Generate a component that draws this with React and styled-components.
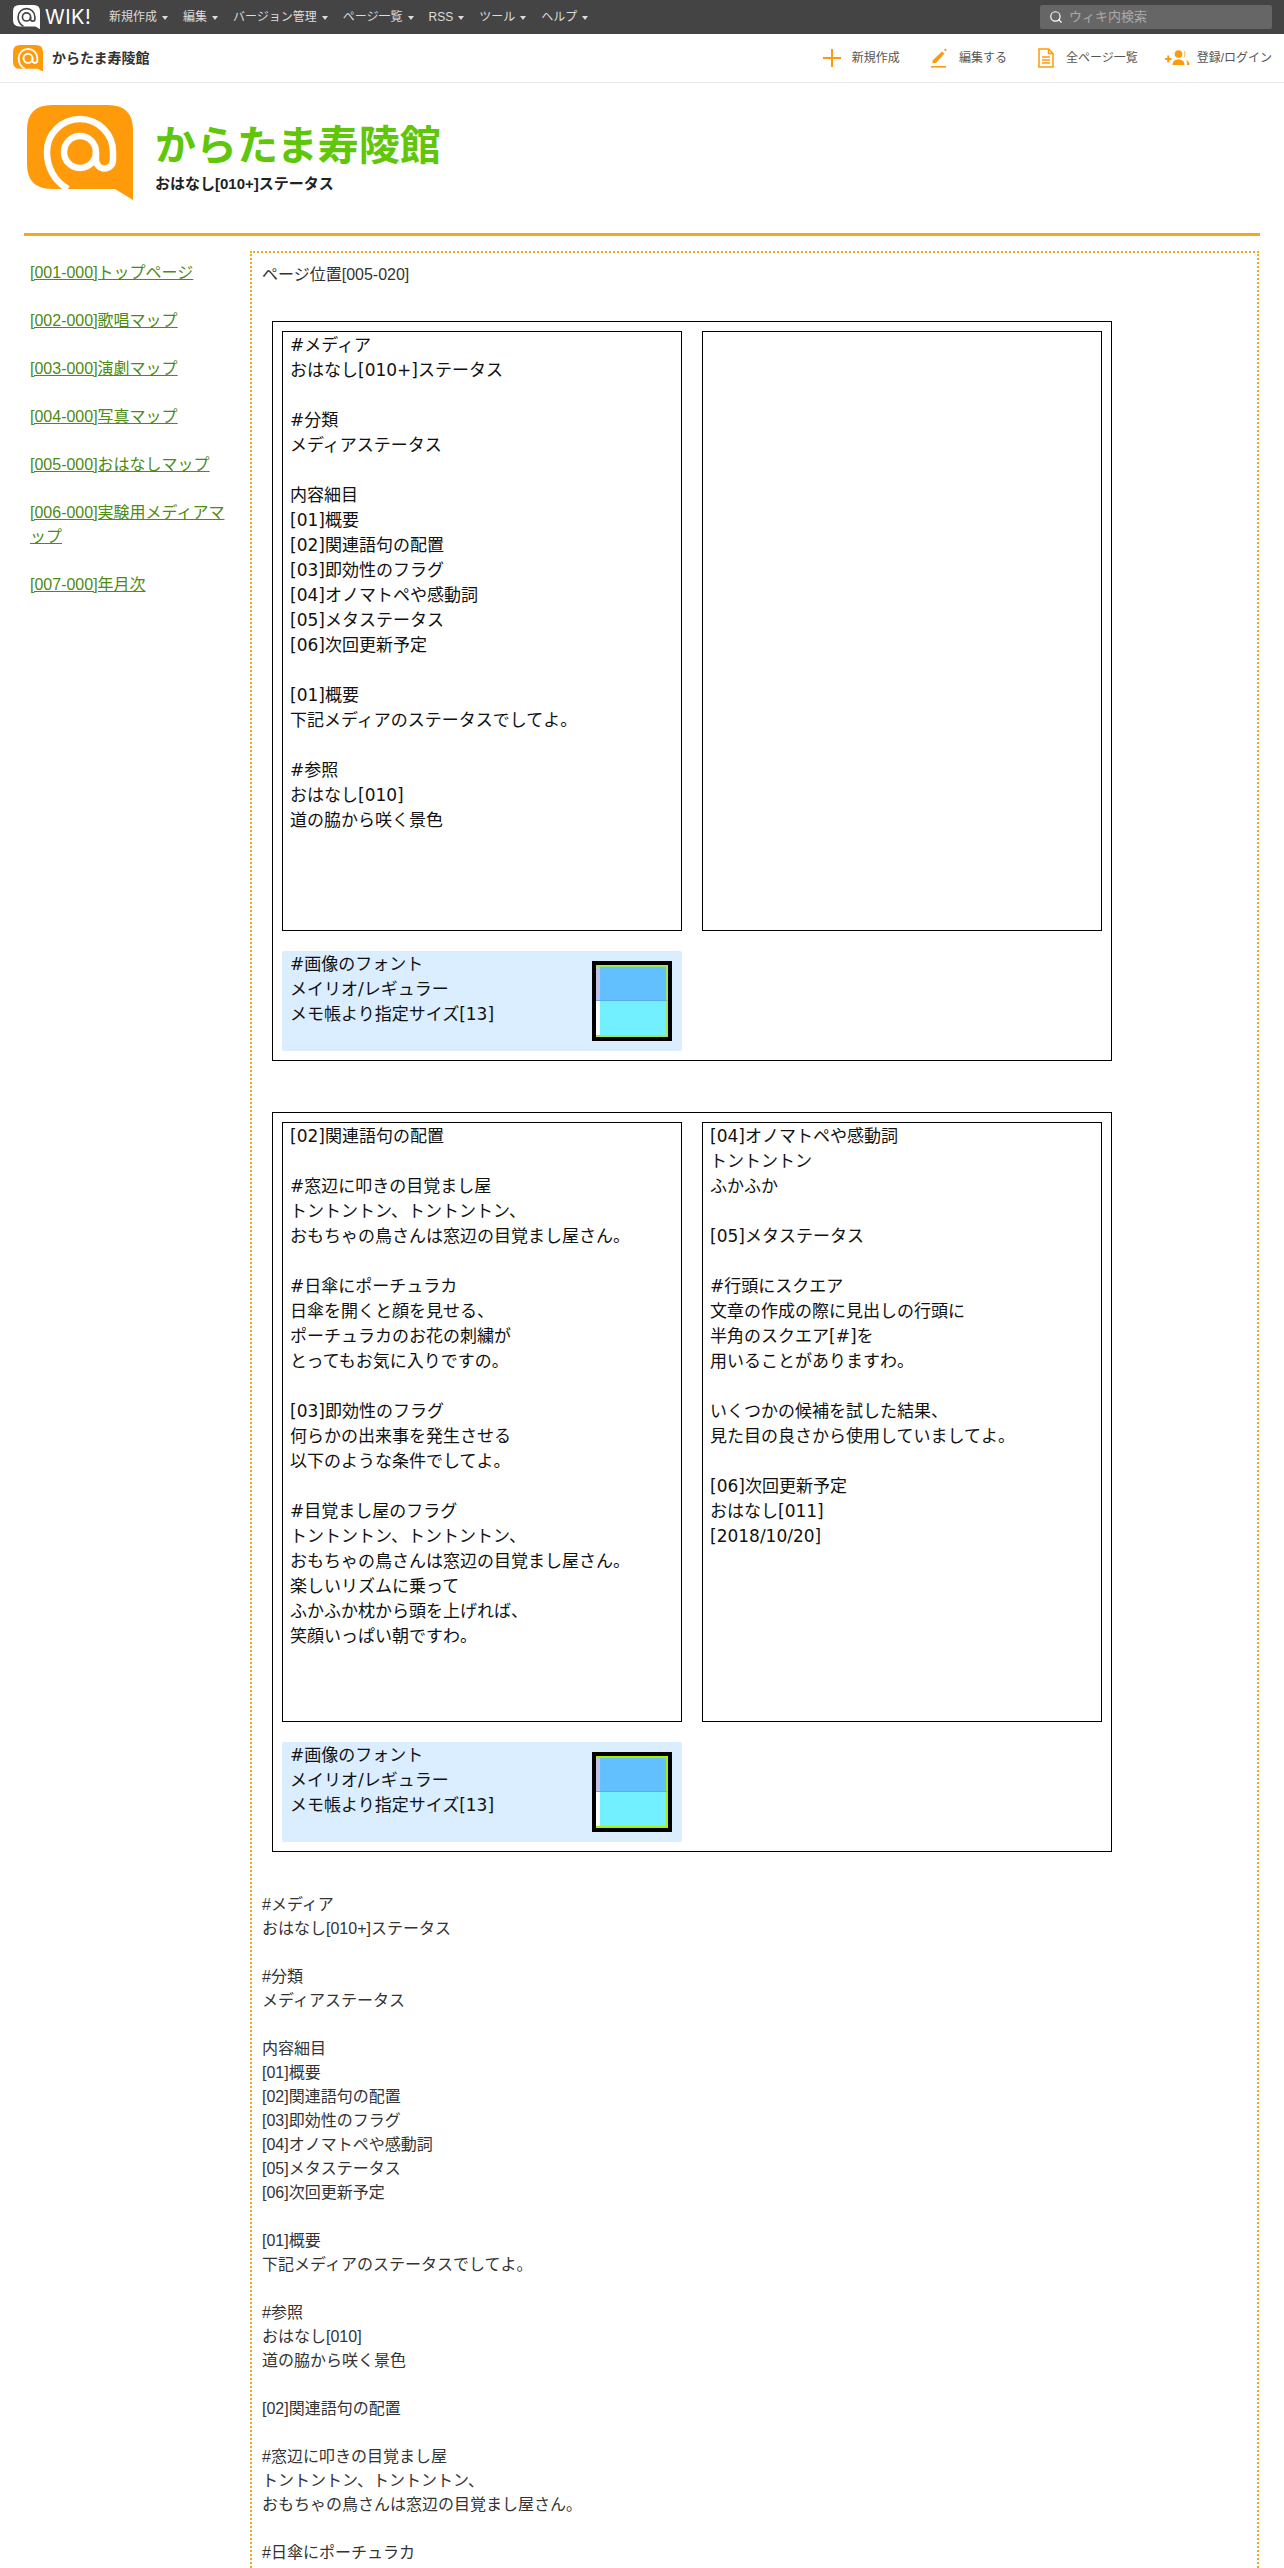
import styled, { createGlobalStyle } from "styled-components"
import { Search } from "lucide-react"

const sans = `"Liberation Sans", "Noto Sans CJK JP", sans-serif`
const orange = "#ff9a0a"

const GlobalStyle = createGlobalStyle`
  html, body {
    margin: 0;
    padding: 0;
    background: #fff;
  }
  body {
    font-family: ${sans};
    font-size: 16px;
    line-height: 24px;
    color: #333;
  }
`

const Page = styled.div`
  height: 2568px;
  overflow: hidden;
`

const TopBar = styled.header`
  display: flex;
  align-items: center;
  height: 34px;
  padding: 0 12px 0 13px;
  background: #444;
  box-sizing: border-box;
`

const WikiLogo = styled.div`
  display: flex;
  align-items: center;
  gap: 5px;
  width: 96px;
`

const WikiWord = styled.span`
  font-family: "Inter", sans-serif;
  font-weight: 400;
  font-size: 20px;
  line-height: 24px;
  letter-spacing: 0.5px;
  color: #fff;
`

const TopNav = styled.nav`
  display: flex;
  flex: 1;
`

const TopItem = styled.span`
  display: flex;
  align-items: center;
  margin-right: 15px;
  font-size: 12px;
  line-height: 16px;
  color: #ddd;

  &::after {
    content: "";
    margin: 1px 0 0 5px;
    border-top: 4px solid #ddd;
    border-left: 3px solid transparent;
    border-right: 3px solid transparent;
  }
`

const SearchBox = styled.div`
  display: flex;
  align-items: center;
  gap: 6px;
  width: 232px;
  height: 24px;
  padding-left: 9px;
  box-sizing: border-box;
  background: #666;
  border-radius: 2px;
  font-size: 13px;
  color: #aaa;

  svg {
    color: #fff;
  }
`

const SubBar = styled.div`
  display: flex;
  align-items: center;
  justify-content: space-between;
  height: 49px;
  padding: 0 12px 0 13px;
  box-sizing: border-box;
  border-bottom: 1px solid #e8e8e8;
`

const SubBrand = styled.div`
  display: flex;
  align-items: center;
  gap: 9px;
  font-size: 14px;
  font-weight: bold;
  color: #333;
`

const SubLinks = styled.div`
  display: flex;
  align-items: center;
`

const SubLink = styled.span`
  display: flex;
  align-items: center;
  gap: ${props => props.$gap}px;
  margin-left: ${props => props.$left}px;
  font-size: 12px;
  color: #555;
`

const SiteHeader = styled.div`
  display: flex;
  align-items: flex-start;
  gap: 22px;
  height: 153px;
  margin: 0 24px;
  padding: 22px 0 0 3px;
  box-sizing: border-box;
  border-bottom: 3px solid #f5a81c;
`

const SiteTitle = styled.h1`
  margin: 13px 0 0;
  font-size: 41px;
  line-height: 56px;
  font-weight: bold;
  color: #5fc60a;
`

const SiteSub = styled.div`
  margin-top: -2px;
  font-size: 15px;
  line-height: 24px;
  font-weight: bold;
  color: #222;
`

const Columns = styled.div`
  display: flex;
  margin: 15px 25px 0 30px;
`

const SideNav = styled.nav`
  flex: none;
  width: 195px;
  margin-right: 25px;
  padding-top: 10px;
`

const SideLink = styled.a`
  display: block;
  margin-bottom: 24px;
  color: #4e8c10;
  text-decoration: underline;
`

const Main = styled.main`
  flex: 1;
  min-height: 2400px;
  padding: 10px 10px 0;
  border: 2px dotted #f5a81c;
  border-bottom: 0;
`

const Frame = styled.div`
  display: grid;
  grid-template-columns: 400px 400px;
  grid-template-rows: 600px 100px;
  gap: 20px;
  width: 840px;
  height: 740px;
  padding: 9px;
  margin: ${props => props.$top}px 0 0 10px;
  box-sizing: border-box;
  border: 1px solid #000;
  font-family: "DejaVu Sans", "Noto Sans CJK JP", sans-serif;
  font-size: 17px;
  line-height: 25px;
  color: #111;
`

const TextBox = styled.div`
  padding: 1px 7px 0;
  box-sizing: border-box;
  border: 1px solid #000;
  white-space: pre-line;
`

const FontNote = styled.div`
  display: flex;
  justify-content: space-between;
  padding: 1px 10px 0 8px;
  background: #dbeeff;
  border-radius: 2px;
  white-space: pre-line;
`

const Swatch = styled.div`
  display: grid;
  grid-template-rows: 1fr 1fr;
  flex: none;
  align-self: flex-end;
  width: 80px;
  height: 80px;
  margin-bottom: 10px;
  box-sizing: border-box;
  border: 4px solid #000;
`

const SwatchTop = styled.div`
  border-top: 2px solid ${props => props.$green};
  border-right: 2px solid ${props => props.$green};
  border-bottom: 1px solid #58adf2;
  background: linear-gradient(to right, #c2c0e8 4px, #62c0ff 4px);
`

const SwatchBottom = styled.div`
  border-bottom: 2px solid ${props => props.$green};
  border-right: 2px solid ${props => props.$green};
  background: linear-gradient(to right, #fff 4px, #72f0ff 4px);
`

const PlainText = styled.div`
  margin-top: ${props => props.$top}px;
  white-space: pre-line;
`

function AtBubble({ size, fill, mark }) {
  return (
    <svg width={size} height={size * 95 / 106} viewBox="0 0 106 95">
      <path d="M25 0H81Q106 0 106 25V95L88 84H25Q0 84 0 59V25Q0 0 25 0Z" fill={fill} />
      <g fill="none" stroke={mark} strokeWidth="6.5">
        <path d="M41 84C27 76 20 62 20 47A33 33 0 0 1 86 47V55A8.5 8.5 0 0 1 69 55V47" />
        <circle cx="53" cy="47" r="16" />
      </g>
    </svg>
  )
}

function PlusIcon() {
  return (
    <svg width="18" height="20" viewBox="0 0 18 20">
      <path d="M0 10H18M9 1V19" stroke={orange} strokeWidth="2" />
    </svg>
  )
}

function PencilIcon() {
  return (
    <svg width="16" height="20" viewBox="0 0 16 20" fill={orange}>
      <path d="M11 3.500L13.500 5.500L5 15H1.500V12.500Z" />
      <path d="M13 1.500L14.200 .6L15.800 2L14.600 3.600Z" />
      <rect x="0" y="18" width="15" height="1.600" />
    </svg>
  )
}

function DocIcon() {
  return (
    <svg width="16" height="20" viewBox="0 0 16 20" fill="none" stroke={orange} strokeWidth="1.500">
      <path d="M1 1H10.500L15 5.500V19H1Z" />
      <path d="M10.500 1V5.500H15M4 9H12M4 12H12M4 15H12" />
    </svg>
  )
}

function UsersIcon() {
  return (
    <svg width="25" height="17" viewBox="0 0 25 17" fill={orange}>
      <path d="M0 9H6.500M3.250 5.500V12.500" stroke={orange} strokeWidth="2" />
      <circle cx="13.500" cy="4" r="3.800" />
      <path d="M7.500 15C7.500 11 10 9.500 13.500 9.500S19.500 11 19.500 15Z" />
      <path d="M18.500 .5C21 1 21 7 18.500 7.500C20 6 20 2 18.500 .5Z" />
      <path d="M21 10C23 11 24.500 12.500 24.500 15H22C22 13 22 11.500 21 10Z" />
    </svg>
  )
}

function FontInfo({ green }) {
  return (
    <FontNote>
      <div>{`#画像のフォント
メイリオ/レギュラー
メモ帳より指定サイズ[13]`}</div>
      <Swatch>
        <SwatchTop $green={green} />
        <SwatchBottom $green={green} />
      </Swatch>
    </FontNote>
  )
}

const topItems = ["新規作成", "編集", "バージョン管理", "ページ一覧", "RSS", "ツール", "ヘルプ"]

const sideItems = [
  "[001-000]トップページ",
  "[002-000]歌唱マップ",
  "[003-000]演劇マップ",
  "[004-000]写真マップ",
  "[005-000]おはなしマップ",
  "[006-000]実験用メディアマップ",
  "[007-000]年月次",
]

const boxA = `#メディア
おはなし[010+]ステータス

#分類
メディアステータス

内容細目
[01]概要
[02]関連語句の配置
[03]即効性のフラグ
[04]オノマトペや感動詞
[05]メタステータス
[06]次回更新予定

[01]概要
下記メディアのステータスでしてよ。

#参照
おはなし[010]
道の脇から咲く景色`

const boxB = `[02]関連語句の配置

#窓辺に叩きの目覚まし屋
トントントン、トントントン、
おもちゃの鳥さんは窓辺の目覚まし屋さん。

#日傘にポーチュラカ
日傘を開くと顔を見せる、
ポーチュラカのお花の刺繍が
とってもお気に入りですの。

[03]即効性のフラグ
何らかの出来事を発生させる
以下のような条件でしてよ。

#目覚まし屋のフラグ
トントントン、トントントン、
おもちゃの鳥さんは窓辺の目覚まし屋さん。
楽しいリズムに乗って
ふかふか枕から頭を上げれば、
笑顔いっぱい朝ですわ。`

const boxC = `[04]オノマトペや感動詞
トントントン
ふかふか

[05]メタステータス

#行頭にスクエア
文章の作成の際に見出しの行頭に
半角のスクエア[#]を
用いることがありますわ。

いくつかの候補を試した結果、
見た目の良さから使用していましてよ。

[06]次回更新予定
おはなし[011]
[2018/10/20]`

const bodyText = `#メディア
おはなし[010+]ステータス

#分類
メディアステータス

内容細目
[01]概要
[02]関連語句の配置
[03]即効性のフラグ
[04]オノマトペや感動詞
[05]メタステータス
[06]次回更新予定

[01]概要
下記メディアのステータスでしてよ。

#参照
おはなし[010]
道の脇から咲く景色

[02]関連語句の配置

#窓辺に叩きの目覚まし屋
トントントン、トントントン、
おもちゃの鳥さんは窓辺の目覚まし屋さん。

#日傘にポーチュラカ`

function App() {
  return (
    <Page>
      <GlobalStyle />
      <TopBar>
        <WikiLogo>
          <AtBubble size={27} fill="#fff" mark="#444" />
          <WikiWord>WIK!</WikiWord>
        </WikiLogo>
        <TopNav>
          {topItems.map(item => <TopItem key={item}>{item}</TopItem>)}
        </TopNav>
        <SearchBox>
          <Search size={14} strokeWidth={2} />
          ウィキ内検索
        </SearchBox>
      </TopBar>
      <SubBar>
        <SubBrand>
          <AtBubble size={30} fill={orange} mark="#fff" />
          からたま寿陵館
        </SubBrand>
        <SubLinks>
          <SubLink $gap={11} $left={0}><PlusIcon />新規作成</SubLink>
          <SubLink $gap={12} $left={31}><PencilIcon />編集する</SubLink>
          <SubLink $gap={12} $left={31}><DocIcon />全ページ一覧</SubLink>
          <SubLink $gap={7} $left={27}><UsersIcon />登録/ログイン</SubLink>
        </SubLinks>
      </SubBar>
      <SiteHeader>
        <AtBubble size={106} fill={orange} mark="#fff" />
        <div>
          <SiteTitle>からたま寿陵館</SiteTitle>
          <SiteSub>おはなし[010+]ステータス</SiteSub>
        </div>
      </SiteHeader>
      <Columns>
        <SideNav>
          {sideItems.map(item => <SideLink key={item} href="#">{item}</SideLink>)}
        </SideNav>
        <Main>
          ページ位置[005-020]
          <Frame $top={34}>
            <TextBox>{boxA}</TextBox>
            <TextBox />
            <FontInfo green="#9ee85a" />
          </Frame>
          <Frame $top={51}>
            <TextBox>{boxB}</TextBox>
            <TextBox>{boxC}</TextBox>
            <FontInfo green="#a8f000" />
          </Frame>
          <PlainText $top={41}>{bodyText}</PlainText>
        </Main>
      </Columns>
    </Page>
  )
}

export default App
